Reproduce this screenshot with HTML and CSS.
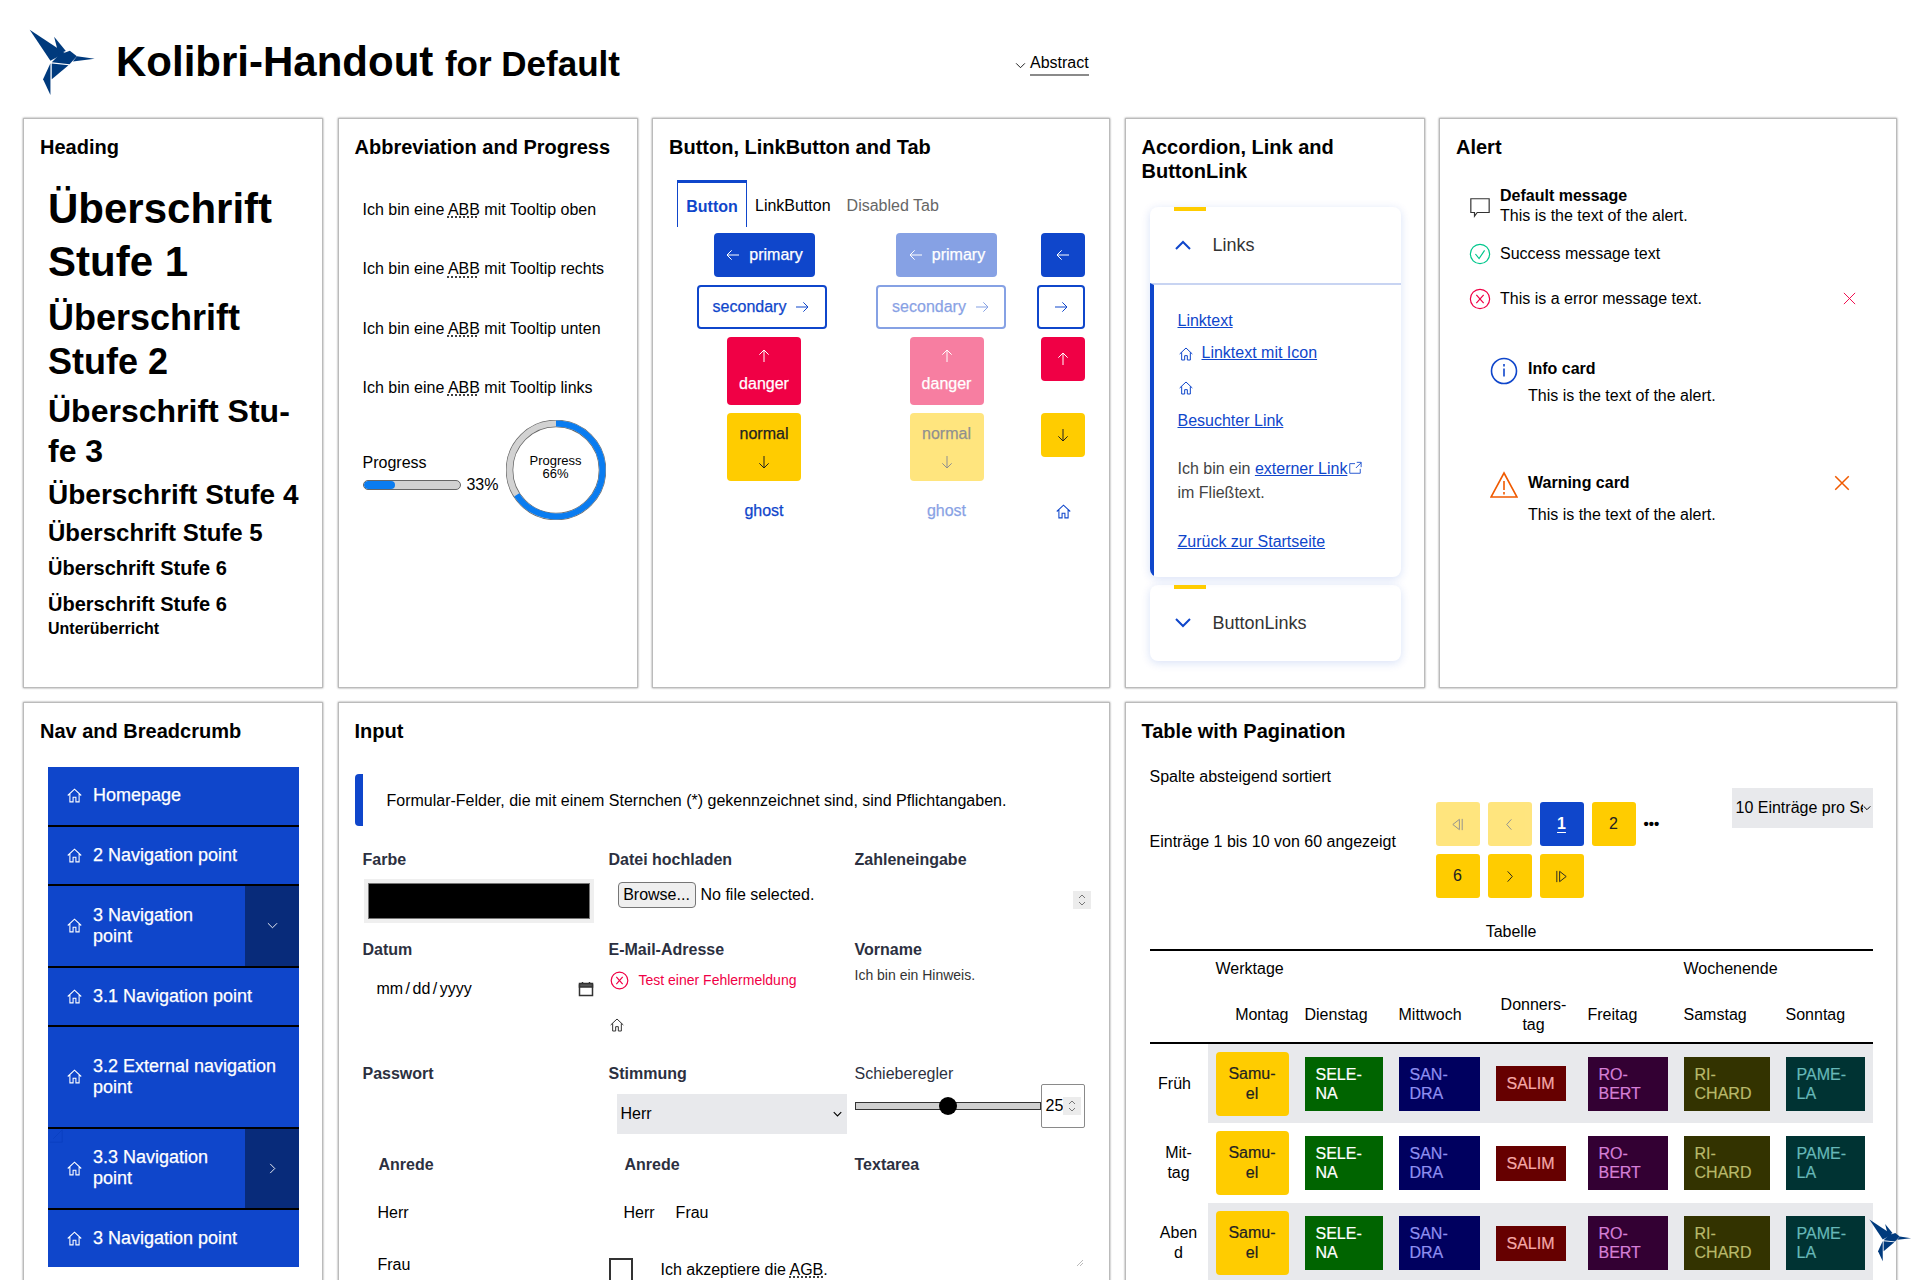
FILE: index.html
```html
<!DOCTYPE html>
<html lang="de">
<head>
    <meta charset="UTF-8">
    <meta name="viewport" content="width=device-width, initial-scale=1.0">
    <title>Kolibri-Handout</title>
    <link rel="stylesheet" href="styles.css">
</head>
<body>
    <svg class="sprites" width="0" height="0" aria-hidden="true">
        <symbol id="bird" viewBox="85 85 200 200">
            <path d="M87 87L149 180 192 157Z"/>
            <path d="M160 108L195 151 173 159Z"/>
            <path d="M153 184L175 162 207 150 228 166 206 190Z"/>
            <path d="M228 166L281 174 216 182Z"/>
            <path d="M153 188L203 193 153 235Z"/>
            <path d="M149 187V282L127 235Z"/>
        </symbol>
        <symbol id="home" viewBox="0 0 24 24">
            <path d="M2.5 12L12 3l9.5 9M5.5 9.5V21H10v-6.5h4V21h4.500V9.5"/>
        </symbol>
        <symbol id="left" viewBox="0 0 24 24"><path d="M21 12H3M10 5l-7 7 7 7"/></symbol>
        <symbol id="right" viewBox="0 0 24 24"><path d="M3 12h18M14 5l7 7-7 7"/></symbol>
        <symbol id="up" viewBox="0 0 24 24"><path d="M12 21V3M5 10l7-7 7 7"/></symbol>
        <symbol id="down" viewBox="0 0 24 24"><path d="M12 3v18M5 14l7 7 7-7"/></symbol>
        <symbol id="close" viewBox="0 0 24 24"><path d="M3 3l18 18M21 3L3 21"/></symbol>
    </svg>

    <header class="page-header">
        <svg class="logo"><use href="#bird"/></svg>
        <h1 class="page-title">Kolibri-Handout <small>for Default</small></h1>
        <div class="abstract">
            <svg class="abstract-chevron" viewBox="0 0 12 8"><path d="M1 1.5l5 5 5-5"/></svg>
            <span class="abstract-label">Abstract</span>
        </div>
    </header>

    <main class="board">
        <section class="card">
            <h2 class="card-title">Heading</h2>
            <div class="headings">
                <div class="h1">Überschrift Stufe 1</div>
                <div class="h2">Überschrift Stufe 2</div>
                <div class="h3">Überschrift Stu-<br>fe 3</div>
                <div class="h4">Überschrift Stufe 4</div>
                <div class="h5">Überschrift Stufe 5</div>
                <div class="h6">Überschrift Stufe 6</div>
                <div class="h6 h6-last">Überschrift Stufe 6</div>
                <div class="subheading">Unterüberricht</div>
            </div>
        </section>

        <section class="card">
            <h2 class="card-title">Abbreviation and Progress</h2>
            <div class="abbr-list">
                <p>Ich bin eine <abbr>ABB</abbr> mit Tooltip oben</p>
                <p>Ich bin eine <abbr>ABB</abbr> mit Tooltip rechts</p>
                <p>Ich bin eine <abbr>ABB</abbr> mit Tooltip unten</p>
                <p>Ich bin eine <abbr>ABB</abbr> mit Tooltip links</p>
            </div>
            <div class="progress-row">
                <div class="progress-bar-wrap">
                    <div>Progress</div>
                    <div class="progress-line">
                        <div class="progress-bar"><div class="progress-fill"></div></div>
                        <span>33%</span>
                    </div>
                </div>
                <div class="progress-circle">
                    <svg viewBox="0 0 100 100">
                        <circle class="ring-edge" cx="50" cy="50" r="46.5"/>
                        <circle class="ring-bg" cx="50" cy="50" r="46.5"/>
                        <circle class="ring-fill" cx="50" cy="50" r="46.5" pathLength="100" stroke-dasharray="66 100" transform="rotate(-90 50 50)"/>
                    </svg>
                    <div class="progress-circle-text">Progress<br>66%</div>
                </div>
            </div>
        </section>

        <section class="card">
            <h2 class="card-title">Button, LinkButton and Tab</h2>
            <div class="tabs">
                <span class="tab tab-active">Button</span>
                <span class="tab">LinkButton</span>
                <span class="tab tab-disabled">Disabled Tab</span>
            </div>
            <div class="button-grid">
                <button class="btn btn-primary"><svg class="ico"><use href="#left"/></svg>primary</button>
                <button class="btn btn-primary is-disabled"><svg class="ico"><use href="#left"/></svg>primary</button>
                <button class="btn btn-primary btn-icon"><svg class="ico"><use href="#left"/></svg></button>

                <button class="btn btn-secondary">secondary<svg class="ico"><use href="#right"/></svg></button>
                <button class="btn btn-secondary is-disabled">secondary<svg class="ico"><use href="#right"/></svg></button>
                <button class="btn btn-secondary btn-icon btn-icon-wide"><svg class="ico"><use href="#right"/></svg></button>

                <button class="btn btn-danger btn-stack"><svg class="ico"><use href="#up"/></svg>danger</button>
                <button class="btn btn-danger btn-stack is-disabled"><svg class="ico"><use href="#up"/></svg>danger</button>
                <button class="btn btn-danger btn-icon"><svg class="ico"><use href="#up"/></svg></button>

                <button class="btn btn-normal btn-stack">normal<svg class="ico"><use href="#down"/></svg></button>
                <button class="btn btn-normal btn-stack is-disabled">normal<svg class="ico"><use href="#down"/></svg></button>
                <button class="btn btn-normal btn-icon"><svg class="ico"><use href="#down"/></svg></button>

                <button class="btn btn-ghost">ghost</button>
                <button class="btn btn-ghost is-disabled">ghost</button>
                <button class="btn btn-ghost btn-icon"><svg class="ico ico-home"><use href="#home"/></svg></button>
            </div>
        </section>

        <section class="card">
            <h2 class="card-title">Accordion, Link and ButtonLink</h2>
            <div class="accordion">
                <div class="acc-head">
                    <svg class="acc-chevron" viewBox="0 0 16 10"><path d="M1 9l7-7 7 7"/></svg>
                    <span>Links</span>
                </div>
                <div class="acc-body">
                    <p class="acc-link acc-link-first"><a href="#">Linktext</a></p>
                    <p class="acc-link"><svg class="ico-link"><use href="#home"/></svg><a href="#">Linktext mit Icon</a></p>
                    <p class="acc-link"><svg class="ico-link"><use href="#home"/></svg></p>
                    <p class="acc-link"><a href="#">Besuchter Link</a></p>
                    <p class="acc-text">Ich bin ein <a href="#">externer Link<svg class="ico-ext" viewBox="0 0 16 16"><path d="M14 9v5H2V3h6M9 8l6-6M10 1.5h5V7"/></svg></a><br>im Fließtext.</p>
                    <p class="acc-back"><a href="#">Zurück zur Startseite</a></p>
                </div>
            </div>
            <div class="accordion accordion-closed">
                <div class="acc-head">
                    <svg class="acc-chevron" viewBox="0 0 16 10"><path d="M1 1l7 7 7-7"/></svg>
                    <span>ButtonLinks</span>
                </div>
            </div>
        </section>

        <section class="card">
            <h2 class="card-title">Alert</h2>
            <div class="alerts">
                <div class="alert alert-default">
                    <svg class="alert-ico" viewBox="0 0 24 24"><path d="M2 3h20v15H9l-3 4v-4H2z"/></svg>
                    <div><strong>Default message</strong><br>This is the text of the alert.</div>
                </div>
                <div class="alert alert-success">
                    <svg class="alert-ico" viewBox="0 0 24 24"><circle cx="12" cy="12" r="10.5"/><path d="M7 12l4 5 6-9"/></svg>
                    <div>Success message text</div>
                </div>
                <div class="alert alert-error">
                    <svg class="alert-ico" viewBox="0 0 24 24"><circle cx="12" cy="12" r="10.5"/><path d="M8 7.5l8 9M16 7.5l-8 9"/></svg>
                    <div>This is a error message text.</div>
                    <svg class="alert-close"><use href="#close"/></svg>
                </div>
                <div class="alert-card alert-info">
                    <svg class="alert-card-ico" viewBox="0 0 28 28"><circle cx="14" cy="14" r="12.5"/><path d="M14 11.5v8M14 7v2.5"/></svg>
                    <div>
                        <div class="alert-card-title">Info card</div>
                        <div>This is the text of the alert.</div>
                    </div>
                </div>
                <div class="alert-card alert-warning">
                    <svg class="alert-card-ico" viewBox="0 0 28 28"><path d="M14 2L27 26H1z"/><path d="M14 10v9M14 21v2.5"/></svg>
                    <div>
                        <div class="alert-card-title">Warning card</div>
                        <div>This is the text of the alert.</div>
                    </div>
                    <svg class="alert-card-close"><use href="#close"/></svg>
                </div>
            </div>
        </section>

        <section class="card card-nav">
            <h2 class="card-title">Nav and Breadcrumb</h2>
            <nav class="nav">
                <div class="nav-item nav-short"><div class="nav-link"><svg class="nav-ico"><use href="#home"/></svg><span>Homepage</span></div></div>
                <div class="nav-item nav-short"><div class="nav-link"><svg class="nav-ico"><use href="#home"/></svg><span>2 Navigation point</span></div></div>
                <div class="nav-item nav-tall">
                    <div class="nav-link"><svg class="nav-ico"><use href="#home"/></svg><span>3 Navigation point</span></div>
                    <div class="nav-toggle"><svg viewBox="0 0 12 8"><path d="M1 1.5l5 5 5-5"/></svg></div>
                </div>
                <div class="nav-item nav-short"><div class="nav-link"><svg class="nav-ico"><use href="#home"/></svg><span>3.1 Navigation point</span></div></div>
                <div class="nav-item nav-ext-item"><div class="nav-link"><svg class="nav-ico"><use href="#home"/></svg><span>3.2 External navigation point</span></div></div>
                <div class="nav-item nav-tall">
                    <svg class="nav-ext" viewBox="0 0 16 16"><path d="M15 1v14H1M15 1L5 11"/></svg>
                    <div class="nav-link"><svg class="nav-ico"><use href="#home"/></svg><span>3.3 Navigation point</span></div>
                    <div class="nav-toggle"><svg viewBox="0 0 8 12"><path d="M1.5 1l5 5-5 5"/></svg></div>
                </div>
                <div class="nav-item nav-last"><div class="nav-link"><svg class="nav-ico"><use href="#home"/></svg><span>3 Navigation point</span></div></div>
            </nav>
        </section>

        <section class="card card-input">
            <h2 class="card-title">Input</h2>
            <div class="notice">Formular-Felder, die mit einem Sternchen (*) gekennzeichnet sind, sind Pflichtangaben.</div>
            <div class="form-grid">
                <div class="field">
                    <div class="label">Farbe</div>
                    <div class="color-input"><div class="color-swatch"></div></div>
                </div>
                <div class="field">
                    <div class="label">Datei hochladen</div>
                    <div class="file-input"><span class="file-btn">Browse...</span><span>No file selected.</span></div>
                </div>
                <div class="field">
                    <div class="label">Zahleneingabe</div>
                    <div class="number-input"><span class="spinner"><svg viewBox="0 0 10 16"><path d="M2 6l3-3 3 3M2 10l3 3 3-3"/></svg></span></div>
                </div>

                <div class="field">
                    <div class="label">Datum</div>
                    <div class="date-input">
                        <span>mm / dd / yyyy</span>
                        <svg class="date-ico" viewBox="0 0 16 16"><path d="M1.5 4h13v10.5h-13z"/><path class="date-top" d="M1.5 2.5h13V6h-13zM4.5 1v2M11.5 1v2"/></svg>
                    </div>
                </div>
                <div class="field">
                    <div class="label">E-Mail-Adresse</div>
                    <div class="error-line"><svg class="error-ico" viewBox="0 0 24 24"><circle cx="12" cy="12" r="10.5"/><path d="M8 7.5l8 9M16 7.5l-8 9"/></svg><span>Test einer Fehlermeldung</span></div>
                    <svg class="field-home"><use href="#home"/></svg>
                </div>
                <div class="field">
                    <div class="label">Vorname</div>
                    <div class="hint">Ich bin ein Hinweis.</div>
                </div>

                <div class="field">
                    <div class="label">Passwort</div>
                </div>
                <div class="field">
                    <div class="label">Stimmung</div>
                    <div class="select-input"><span>Herr</span><svg viewBox="0 0 12 8"><path d="M1 1.5l5 5 5-5"/></svg></div>
                </div>
                <div class="field">
                    <div class="label label-plain">Schieberegler</div>
                    <div class="range-row">
                        <div class="range-track"><div class="range-thumb"></div></div>
                        <div class="range-number"><span>25</span><span class="spinner"><svg viewBox="0 0 10 16"><path d="M2 6l3-3 3 3M2 10l3 3 3-3"/></svg></span></div>
                    </div>
                </div>

                <div class="field field-inset">
                    <div class="label">Anrede</div>
                    <div class="radio-stack"><span>Herr</span><span>Frau</span></div>
                </div>
                <div class="field field-inset">
                    <div class="label">Anrede</div>
                    <div class="radio-row"><span>Herr</span><span>Frau</span></div>
                    <div class="agb"><span class="agb-box"></span><span>Ich akzeptiere die <abbr>AGB</abbr>.</span></div>
                </div>
                <div class="field">
                    <div class="label">Textarea</div>
                    <svg class="resizer" viewBox="0 0 8 8"><path d="M7 1L1 7M7 4L4 7"/></svg>
                </div>
            </div>
        </section>

        <section class="card card-table">
            <h2 class="card-title">Table with Pagination</h2>
            <div class="sort-note">Spalte absteigend sortiert</div>
            <div class="pager-row">
                <div class="pager-count">Einträge 1 bis 10 von 60 angezeigt</div>
                <div class="pager">
                    <span class="page-btn is-disabled"><svg viewBox="0 0 16 16"><path d="M13 2v12M10 2.5L3 8l7 5.5z"/></svg></span>
                    <span class="page-btn is-disabled"><svg viewBox="0 0 16 16"><path d="M10 2.5L5 8l5 5.5"/></svg></span>
                    <span class="page-btn page-current">1</span>
                    <span class="page-btn">2</span>
                    <span class="page-dots">•••</span>
                    <span class="page-btn">6</span>
                    <span class="page-btn"><svg viewBox="0 0 16 16"><path d="M6 2.5L11 8l-5 5.5"/></svg></span>
                    <span class="page-btn"><svg viewBox="0 0 16 16"><path d="M3 2v12M6 2.5L13 8l-7 5.5z"/></svg></span>
                </div>
                <div class="page-size"><span>10 Einträge pro Seite</span><svg viewBox="0 0 12 8"><path d="M1 1.5l5 5 5-5"/></svg></div>
            </div>
            <table class="data-table">
                <caption>Tabelle</caption>
                <colgroup>
                    <col class="c-label"><col class="c-mo"><col class="c-di"><col class="c-mi"><col class="c-do"><col class="c-fr"><col class="c-sa"><col class="c-so">
                </colgroup>
                <thead>
                    <tr class="group-row">
                        <th></th>
                        <th colspan="5">Werktage</th>
                        <th colspan="2">Wochenende</th>
                    </tr>
                    <tr class="day-row">
                        <th></th>
                        <th class="right">Montag</th>
                        <th>Dienstag</th>
                        <th>Mittwoch</th>
                        <th class="center">Donners-<br>tag</th>
                        <th>Freitag</th>
                        <th>Samstag</th>
                        <th>Sonntag</th>
                    </tr>
                </thead>
                <tbody id="tableBody"></tbody>
            </table>
        </section>
    </main>

    <svg class="logo-float"><use href="#bird"/></svg>

    <script>
        const slots = ['Früh', 'Mit-<br>tag', 'Aben<br>d'];
        const people = [
            ['samuel', 'Samu-<br>el'],
            ['selena', 'SELE-<br>NA'],
            ['sandra', 'SAN-<br>DRA'],
            ['salim', 'SALIM'],
            ['robert', 'RO-<br>BERT'],
            ['richard', 'RI-<br>CHARD'],
            ['pamela', 'PAME-<br>LA']
        ];

        // Same seven people in every row
        const tableBody = document.getElementById('tableBody');
        tableBody.innerHTML = slots.map((slot) => {
            const cells = people.map(([cls, name]) => `<td><span class="person person-${cls}">${name}</span></td>`);
            return `<tr><th>${slot}</th>${cells.join('')}</tr>`;
        }).join('');
    </script>
</body>
</html>
```
FILE: styles.css
```css
* {
    margin: 0;
    padding: 0;
    box-sizing: border-box;
}

html, body {
    height: 1280px;
    overflow: hidden;
}

body {
    background: white;
    color: black;
    font-family: "Liberation Sans", Arial, sans-serif;
    font-size: 16px;
    line-height: 24px;
    position: relative;
}

svg {
    fill: none;
    stroke: currentColor;
    display: block;
}

.sprites {
    position: absolute;
}

#bird path {
    fill: #003a7d;
    stroke: none;
}

/* page header */
.page-header {
    height: 118px;
    display: flex;
    align-items: center;
    padding: 6px 0 0 29px;
}

.logo {
    width: 67px;
    height: 67px;
    margin-right: 20px;
}

.page-title {
    font-size: 42px;
    line-height: 50px;
    width: 899px;
    margin-top: 2px;
    white-space: nowrap;
}

.page-title small {
    font-size: 35px;
    font-weight: bold;
}

.abstract {
    display: flex;
    align-items: center;
    gap: 4px;
    margin-top: 4px;
}

.abstract-chevron {
    width: 11px;
    height: 7px;
    margin-top: 3px;
}

.abstract-label {
    border-bottom: 2px solid #8a8a8a;
    line-height: 22px;
}

/* board */
.board {
    display: grid;
    grid-template-columns: 300px 300px 458px 300px 458px;
    grid-template-rows: 570px 640px;
    column-gap: 14.5px;
    row-gap: 14px;
    padding: 0 23px;
}

.card {
    background: white;
    border: 1px solid #bbb;
    box-shadow: 0 0 2px rgba(0, 0, 0, 0.45);
    padding: 16px;
}

.card-nav {
    grid-column: 1;
}

.card-input {
    grid-column: 2 / 4;
}

.card-table {
    grid-column: 4 / 6;
}

.card-title {
    font-size: 20px;
    line-height: 24px;
    font-weight: bold;
}

/* headings */
.headings {
    padding: 24px 0 0 8px;
    font-weight: bold;
    white-space: nowrap;
}

.h1 { font-size: 42px; line-height: 52.5px; margin-bottom: 8px; white-space: normal; width: 240px; }
.h2 { font-size: 36px; line-height: 44px; margin-bottom: 7px; white-space: normal; width: 240px; }
.h3 { font-size: 32px; line-height: 40px; margin-bottom: 6px; }
.h4 { font-size: 28px; line-height: 36px; margin-bottom: 5px; }
.h5 { font-size: 24px; line-height: 30px; margin-bottom: 7px; }
.h6 { font-size: 20px; line-height: 26px; margin-bottom: 10px; }
.h6-last { margin-bottom: 0; }
.subheading { font-size: 16px; line-height: 22px; margin-top: 1px; }

/* abbreviations + progress */
.abbr-list {
    padding: 39px 8px 0;
}

.abbr-list p {
    height: 59.3px;
}

abbr {
    text-decoration: underline dotted;
    text-underline-offset: 2px;
}

.progress-row {
    display: flex;
    align-items: flex-start;
    padding-left: 8px;
    margin-top: -15px;
}

.progress-bar-wrap {
    padding-top: 31px;
    width: 136px;
    flex: none;
    white-space: nowrap;
}

.progress-line {
    display: flex;
    align-items: center;
    gap: 5px;
    margin-top: -2px;
}

.progress-bar {
    width: 100px;
    height: 10px;
    border: 1px solid #666;
    border-radius: 5px;
    background: #d2d2d2;
    overflow: hidden;
}

.progress-fill {
    width: 33%;
    height: 100%;
    background: #0a7cf0;
    border-radius: 4px;
}

.progress-circle {
    position: relative;
    width: 100px;
    height: 100px;
    margin-left: 7px;
    flex: none;
}

.ring-edge {
    stroke: #666;
    stroke-width: 7.5;
}

.ring-bg {
    stroke: #d2d2d2;
    stroke-width: 6;
}

.ring-fill {
    stroke: #0a7cf0;
    stroke-width: 6;
}

.progress-circle-text {
    position: absolute;
    inset: 0;
    padding-bottom: 7px;
    display: flex;
    align-items: center;
    justify-content: center;
    text-align: center;
    font-size: 13px;
    line-height: 13px;
}

/* tabs + buttons */
.tabs {
    display: flex;
    margin: 21px 0 6px 8px;
    height: 47px;
}

.tab {
    padding: 14px 8px 0;
    line-height: 24px;
}

.tab-active {
    width: 70px;
    text-align: center;
    padding: 12px 0 0;
    color: #0f46cb;
    font-weight: bold;
    border: 1px solid #0f46cb;
    border-top-width: 3px;
    border-bottom: none;
}

.tab-disabled {
    color: #666;
    padding-left: 8px;
}

.button-grid {
    display: grid;
    grid-template-columns: 182px 183px 50px;
    justify-items: center;
    align-items: start;
    gap: 8px 0;
    margin-left: 4px;
    width: 415px;
}

.btn {
    font-family: inherit;
    font-size: 16px;
    line-height: 20px;
    border: none;
    border-radius: 4px;
    height: 44px;
    padding: 0 12px;
    display: flex;
    align-items: center;
    justify-content: center;
    gap: 8px;
    -webkit-text-stroke: 0.25px currentColor;
}

.ico {
    width: 16px;
    height: 16px;
    stroke-width: 1.5;
    flex: none;
}

.ico-home {
    width: 17px;
    height: 17px;
}

.btn-primary {
    background: #0f46cb;
    color: white;
    width: 101px;
}

.btn-secondary {
    background: white;
    color: #0f46cb;
    border: 2px solid #0f46cb;
    width: 130px;
    margin-right: 5px;
}

.btn-secondary.is-disabled {
    margin-right: 11px;
}

.btn-danger {
    background: #f00045;
    color: white;
}

.btn-normal {
    background: #ffcc00;
    color: #222;
}

.btn-ghost {
    background: none;
    color: #0f46cb;
}

.btn-stack {
    flex-direction: column;
    height: 68px;
    width: 74px;
    gap: 10px;
}

.btn-icon {
    width: 44px;
    padding: 0;
}

.btn-secondary.btn-icon-wide {
    width: 48px;
    margin-right: 5px;
}

.is-disabled {
    opacity: 0.5;
}

/* accordion */
.accordion {
    position: relative;
    margin: 24px 7px 0 8px;
    border-radius: 8px;
    box-shadow: 0 2px 10px rgba(15, 70, 203, 0.16);
    overflow: hidden;
}

.accordion::before {
    content: "";
    position: absolute;
    top: 0;
    left: 24px;
    width: 32px;
    height: 4px;
    background: #ffcc00;
}

.accordion-closed {
    margin-top: 8px;
}

.acc-head {
    height: 76px;
    display: flex;
    align-items: center;
    font-size: 18px;
    padding-left: 25px;
    gap: 22px;
    color: #333;
}

.acc-chevron {
    width: 16px;
    height: 10px;
    color: #0f46cb;
    stroke-width: 2;
}

.acc-body {
    border-top: 2px solid #c8d4f2;
    border-left: 4px solid #0f46cb;
    padding: 24px 0 24px 24px;
    height: 294px;
    color: #444;
}

.acc-body a {
    color: #0f46cb;
}

.acc-link {
    height: 34px;
    display: flex;
    align-items: flex-start;
}

.acc-link-first {
    height: 32px;
}

.ico-link {
    width: 16px;
    height: 16px;
    margin: 5px 8px 0 0;
    color: #0f46cb;
    stroke-width: 1.5;
}

.ico-ext {
    display: inline;
    width: 14px;
    height: 14px;
    margin-left: 1px;
    vertical-align: -1px;
    stroke-width: 1;
}

.acc-text {
    margin-top: 14px;
}

.acc-back {
    margin-top: 25px;
}

/* alerts */
.alerts {
    padding: 26px 0 0 13px;
}

.alert {
    display: flex;
    align-items: center;
    gap: 9px;
    line-height: 20px;
    position: relative;
}

.alert-ico {
    width: 22px;
    height: 22px;
    flex: none;
    stroke-width: 1.3;
}

.alert-default {
    height: 42px;
    margin-bottom: 14px;
}

.alert-default .alert-ico {
    color: #333;
    margin-top: 1px;
}

.alert-success {
    height: 26px;
    margin-bottom: 19px;
}

.alert-success .alert-ico {
    color: #00c78c;
}

.alert-error {
    height: 26px;
    margin-bottom: 45px;
}

.alert-error .alert-ico {
    color: #f00045;
}

.alert-close {
    position: absolute;
    left: 373px;
    top: 5px;
    width: 15px;
    height: 15px;
    color: #f00045;
    stroke-width: 1.5;
}

.alert-card {
    display: flex;
    gap: 10px;
    padding-left: 21px;
    position: relative;
    line-height: 24px;
}

.alert-card-ico {
    width: 28px;
    height: 28px;
    flex: none;
    stroke-width: 1.6;
}

.alert-card-title {
    font-weight: bold;
    margin-bottom: 3px;
}

.alert-info {
    height: 114px;
}

.alert-info .alert-card-ico {
    color: #0f46cb;
}

.alert-warning .alert-card-ico {
    color: #f05a00;
}

.alert-warning .alert-card-title {
    margin-bottom: 8px;
}

.alert-card-close {
    position: absolute;
    left: 364px;
    top: 3px;
    width: 18px;
    height: 18px;
    color: #f05a00;
    stroke-width: 2;
}

/* nav */
.nav {
    margin: 24px 7px 0 8px;
    background: #0f46cb;
    color: white;
    font-size: 18px;
    line-height: 21px;
    -webkit-text-stroke: 0.25px white;
}

.nav-item {
    display: flex;
    position: relative;
    border-bottom: 2px solid black;
}

.nav-short { height: 59.5px; }
.nav-tall { height: 81.5px; }
.nav-ext-item { height: 101.5px; }

.nav-last {
    height: 56.5px;
    border-bottom: none;
}

.nav-link {
    flex: 1;
    display: flex;
    align-items: center;
    padding: 0 8px 0 18px;
    gap: 10px;
}

.nav-ico {
    width: 17px;
    height: 17px;
    flex: none;
    stroke-width: 1.5;
}

.nav-toggle {
    width: 54px;
    flex: none;
    background: #082b7a;
    display: flex;
    align-items: center;
    justify-content: center;
}

.nav-toggle svg {
    width: 11px;
    height: 11px;
    stroke-width: 1;
}

.nav-ext {
    position: absolute;
    left: 1px;
    top: 0;
    width: 14px;
    height: 14px;
    color: #0a3fc0;
    stroke-width: 1;
}

/* input form */
.notice {
    height: 52px;
    border-left: 8px solid #0f46cb;
    border-radius: 4px 0 0 4px;
    padding: 15px 0 0 24px;
    margin-top: 31px;
}

.form-grid {
    display: grid;
    grid-template-columns: repeat(3, 246px);
    grid-template-rows: 90px 124px 91px 140px;
    margin-top: 22px;
}

.field {
    padding-left: 8px;
    position: relative;
}

.label {
    font-weight: bold;
    color: #2c3040;
    line-height: 24px;
}

.label-plain {
    font-weight: normal;
}

.field-inset .label {
    padding-left: 16px;
}

.color-input {
    width: 230px;
    height: 44px;
    background: #efefef;
    margin: 7px 0 0 1px;
    padding: 4px;
}

.color-swatch {
    width: 222px;
    height: 36px;
    background: black;
    border: 1px solid #767676;
}

.file-input {
    display: flex;
    align-items: center;
    margin: 10px 0 0 9px;
    gap: 5px;
}

.file-btn {
    width: 78px;
    height: 26px;
    line-height: 24px;
    text-align: center;
    background: #efefef;
    border: 1px solid #767676;
    border-radius: 4px;
}

.number-input {
    display: flex;
    justify-content: flex-end;
    margin: 19px 2px 0 0;
}

.spinner {
    display: block;
    width: 18px;
    height: 18px;
    background: #ececec;
    color: #777;
}

.spinner svg {
    width: 10px;
    height: 16px;
    margin: 1px auto;
}

.date-input {
    display: flex;
    justify-content: space-between;
    align-items: center;
    margin: 15px 0 0 4px;
    width: 227px;
    word-spacing: -2px;
    padding-left: 10px;
}

.date-ico {
    width: 16px;
    height: 16px;
    color: #333;
    stroke-width: 1.5;
}

.date-top {
    fill: #555;
}

.error-line {
    display: flex;
    align-items: center;
    color: #f00045;
    font-size: 14px;
    gap: 10px;
    margin: 6px 0 0 1px;
}

.error-ico {
    width: 19px;
    height: 19px;
    flex: none;
    stroke-width: 1.5;
}

.field-home {
    width: 16px;
    height: 16px;
    margin-top: 25px;
    color: #333;
    stroke-width: 1.5;
}

.hint {
    font-size: 14px;
    color: #333;
    line-height: 20px;
    margin-top: 3px;
}

.select-input {
    display: flex;
    justify-content: space-between;
    align-items: center;
    width: 230px;
    height: 40px;
    background: #e8e9ec;
    margin: 8px 0 0 8px;
    padding: 0 5px 0 4px;
}

.select-input svg {
    width: 9px;
    height: 6px;
    stroke-width: 1.5;
}

.range-row {
    display: flex;
    align-items: center;
    margin-top: -2px;
}

.range-track {
    position: relative;
    width: 186px;
    height: 8px;
    background: #d0d0d0;
    border: 1px solid #333;
}

.range-thumb {
    position: absolute;
    left: 83px;
    top: -6px;
    width: 18px;
    height: 18px;
    border-radius: 50%;
    background: black;
}

.range-number {
    display: flex;
    align-items: center;
    width: 44px;
    height: 44px;
    border: 1px solid #8a8a8a;
    border-radius: 2px;
    padding-left: 4px;
}

.radio-stack {
    display: flex;
    flex-direction: column;
    gap: 28px;
    margin: 24px 0 0 15px;
}

.radio-row {
    display: flex;
    gap: 21px;
    margin: 24px 0 0 15px;
}

.agb {
    display: flex;
    gap: 28px;
    margin: 33px 0 0 -8px;
    padding-left: 8px;
    align-items: flex-end;
}

.agb-box {
    width: 24px;
    height: 24px;
    border: 2px solid #333;
    flex: none;
}

.resizer {
    position: absolute;
    left: 229px;
    top: 106px;
    width: 8px;
    height: 8px;
    color: #bbb;
    stroke-width: 1;
}

/* table */
.sort-note {
    padding: 22px 8px 0;
}

.pager-row {
    display: flex;
    align-items: flex-start;
    margin: 0 8px;
    height: 134px;
    position: relative;
}

.pager-count {
    width: 286px;
    flex: none;
    margin-top: 41px;
}

.pager {
    width: 237px;
    flex: none;
    display: flex;
    flex-wrap: wrap;
    gap: 8px;
    margin-top: 13px;
}

.page-btn {
    width: 44px;
    height: 44px;
    border-radius: 3px;
    background: #ffcc00;
    color: #222;
    display: flex;
    align-items: center;
    justify-content: center;
}

.page-btn svg {
    width: 15px;
    height: 15px;
    stroke-width: 1;
}

.page-btn.is-disabled {
    opacity: 0.5;
}

.page-current {
    background: #0f46cb;
    color: white;
    font-weight: bold;
    text-decoration: underline;
    text-underline-offset: 3px;
}

.page-dots {
    width: 28px;
    height: 44px;
    display: flex;
    align-items: center;
    font-size: 15px;
    font-weight: bold;
}

.page-size {
    width: 141px;
    height: 40px;
    flex: none;
    margin: -1px 0 0 59px;
    display: flex;
    align-items: center;
    padding-left: 4px;
    background: #e8e9ec;
    overflow: hidden;
    white-space: nowrap;
}

.page-size span {
    width: 127px;
    overflow: hidden;
    flex: none;
}

.page-size svg {
    width: 8px;
    height: 6px;
    flex: none;
    stroke-width: 1.5;
}

.data-table {
    margin-left: 8px;
    width: 723px;
    table-layout: fixed;
    border-collapse: collapse;
}

.data-table caption {
    text-align: center;
    height: 26px;
    line-height: 18px;
}

.c-label { width: 58px; }
.c-mo { width: 89px; }
.c-di { width: 94px; }
.c-mi { width: 97px; }
.c-do { width: 92px; }
.c-fr { width: 96px; }
.c-sa { width: 102px; }
.c-so { width: 95px; }

.data-table thead {
    border-top: 2px solid black;
}

.data-table th {
    font-weight: normal;
    text-align: left;
    padding: 0 8px;
}

.data-table th.right {
    text-align: right;
    padding-right: 8px;
}

.data-table th.center {
    text-align: center;
}

.group-row th {
    height: 37px;
    vertical-align: middle;
}

.day-row th {
    height: 56px;
    line-height: 20px;
    vertical-align: middle;
}

.data-table tbody {
    border-top: 2px solid black;
}

.data-table tbody tr:nth-child(odd) td {
    background: #e8e9ec;
}

.data-table tbody th {
    text-align: center;
    padding: 0;
    line-height: 20px;
}

.data-table tbody tr:first-child th {
    padding-right: 8px;
}

.data-table td {
    height: 80px;
    padding: 0 8px;
}

.person {
    display: block;
    line-height: 19px;
    padding: 8px 11px;
    -webkit-text-stroke: 0.2px currentColor;
}

.person-samuel {
    background: #ffcc00;
    color: #222;
    text-align: center;
    border-radius: 4px;
    line-height: 20px;
    padding: 12px 0;
}

.person-selena { background: #006400; color: white; }
.person-sandra { background: #00005f; color: #8f8ff0; }
.person-salim { background: #660000; color: #f5a8a8; width: 70px; text-align: center; padding: 8px 0; }
.person-robert { background: #330033; color: #d67fd6; }
.person-richard { background: #333300; color: #b9b96a; }
.person-pamela { background: #003333; color: #66b8b8; }

/* floating logo, stays over the table */
.logo-float {
    position: absolute;
    left: 1869px;
    top: 1219px;
    width: 43px;
    height: 43px;
}
```
